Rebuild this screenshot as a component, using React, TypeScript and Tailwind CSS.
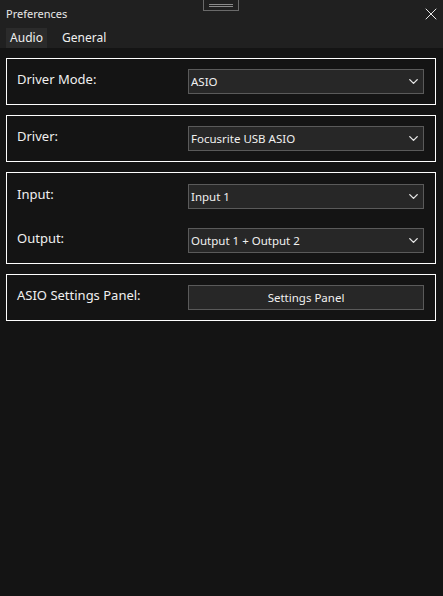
import { ChevronDown, X } from 'lucide-react';

const font = { fontFamily: '"Noto Sans", "Open Sans", sans-serif' };

function Select({ value }: { value: string }) {
  return (
    <div className="w-[236px] h-[25px] bg-[#272727] border border-[#5a5a5a] flex items-center justify-between pl-[2px] pr-[2px]">
      <span className="text-[11.5px] text-[#f0f0f0] leading-none">{value}</span>
      <ChevronDown className="w-[15px] h-[15px] text-[#e6e6e6]" strokeWidth={2.2} />
    </div>
  );
}

function Row({ label, children }: { label: string; children: React.ReactNode }) {
  return (
    <div className="flex items-center justify-between h-[25px]">
      <span className="text-[13px] text-[#f0f0f0] leading-none -mt-[4px]">{label}</span>
      {children}
    </div>
  );
}

export default function App() {
  return (
    <div className="w-[443px] h-[596px] bg-[#141414] flex flex-col" style={font}>
      <header className="relative bg-[#202020] h-[48px] shrink-0">
        <div className="absolute left-[203px] top-[-1px] w-[36px] h-[12px] border border-[#6a6a6a] flex flex-col items-center justify-center gap-[1px]">
          <div className="w-[24px] h-px bg-[#8a8a8a]" />
          <div className="w-[24px] h-px bg-[#8a8a8a]" />
        </div>
        <div className="flex items-center justify-between pl-[6px] pr-[2px] pt-[4px]">
          <span className="text-[11px] text-[#e8e8e8] leading-[20px]">Preferences</span>
          <X className="w-[20px] h-[20px] text-[#e8e8e8]" strokeWidth={1.2} />
        </div>
        <div className="flex items-end pl-[6px] mt-[4px]">
          <div className="w-[41px] h-[20px] bg-[#2b2b2b] text-[12px] text-[#f0f0f0] flex items-center justify-center">Audio</div>
          <div className="h-[20px] pl-[15px] text-[12px] text-[#f0f0f0] flex items-center">General</div>
        </div>
      </header>

      <main className="flex flex-col gap-[10px] pt-[10px] px-[6px] pr-[7px]">
        <div className="border border-white px-[10px] py-[10px] pr-[11px]">
          <Row label="Driver Mode:">
            <Select value="ASIO" />
          </Row>
        </div>
        <div className="border border-white px-[10px] py-[10px] pr-[11px]">
          <Row label="Driver:">
            <Select value="Focusrite USB ASIO" />
          </Row>
        </div>
        <div className="border border-white px-[10px] pt-[11px] pb-[10px] pr-[11px] flex flex-col gap-[19px]">
          <Row label="Input:">
            <Select value="Input 1" />
          </Row>
          <Row label="Output:">
            <Select value="Output 1 + Output 2" />
          </Row>
        </div>
        <div className="border border-white px-[10px] py-[10px] pr-[11px]">
          <Row label="ASIO Settings Panel:">
            <button className="w-[236px] h-[25px] bg-[#272727] border border-[#5a5a5a] text-[11.5px] text-[#f0f0f0] leading-none">
              Settings Panel
            </button>
          </Row>
        </div>
      </main>
    </div>
  );
}
